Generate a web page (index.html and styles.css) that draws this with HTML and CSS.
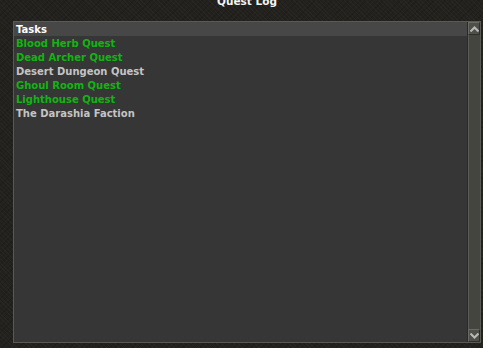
FILE: index.html
```html
<!DOCTYPE html>
<html>
<head>
<meta charset="utf-8">
<link rel="stylesheet" href="styles.css">
</head>
<body>
<div class="window">
  <div class="title">Quest Log</div>
  <div class="panel">
    <div class="list">
      <div class="row header">Tasks</div>
      <div class="row done">Blood Herb Quest</div>
      <div class="row done">Dead Archer Quest</div>
      <div class="row">Desert Dungeon Quest</div>
      <div class="row done">Ghoul Room Quest</div>
      <div class="row done">Lighthouse Quest</div>
      <div class="row">The Darashia Faction</div>
    </div>
    <div class="scrollbar">
      <div class="btn"><svg width="9" height="6" viewBox="0 0 9 6"><path d="M0.5 5.5 L4.5 1.5 L8.5 5.5" fill="none" stroke="#b8b8b8" stroke-width="2"/></svg></div>
      <div class="track"></div>
      <div class="btn"><svg width="9" height="6" viewBox="0 0 9 6"><path d="M0.5 0.5 L4.5 4.5 L8.5 0.5" fill="none" stroke="#b8b8b8" stroke-width="2"/></svg></div>
    </div>
  </div>
</div>
</body>
</html>
```

FILE: styles.css
```css
html, body {
  margin: 0;
  padding: 0;
}
body {
  width: 483px;
  height: 348px;
  overflow: hidden;
  background: #23211e;
  font-family: "DejaVu Sans", Verdana, sans-serif;
}
.window {
  height: 348px;
  display: flex;
  flex-direction: column;
  background-color: #23211e;
  background-image:
    repeating-linear-gradient(45deg, rgba(255,255,255,0.025) 0 1px, transparent 1px 3px),
    repeating-linear-gradient(-45deg, rgba(0,0,0,0.12) 0 1px, transparent 1px 4px);
}
.title {
  height: 27px;
  margin-top: -6px;
  flex: none;
  text-align: center;
  color: #f4f4f4;
  font-weight: bold;
  font-size: 10.5px;
  line-height: 14px;
  padding-left: 11px;
}
.panel {
  margin: 0 2px 5px 13px;
  flex: 1;
  display: flex;
  border: 1px solid #5a5a54;
  background: #363636;
}
.list {
  flex: 1;
  border-right: 1px solid #2a2a28;
}
.row {
  height: 14px;
  line-height: 15px;
  padding-left: 2px;
  font-size: 10px;
  font-weight: bold;
  color: #c4c4c4;
  white-space: nowrap;
}
.row.header {
  background: #474747;
  color: #ffffff;
}
.row.done {
  color: #12b412;
}
.scrollbar {
  width: 12px;
  display: flex;
  flex-direction: column;
  background: #45453f;
}
.btn {
  height: 13px;
  flex: none;
  display: flex;
  align-items: center;
  justify-content: center;
  background: #4f4f4a;
  border-top: 1px solid #6a6a64;
  border-left: 1px solid #6a6a64;
  border-bottom: 1px solid #2e2e2a;
  border-right: 1px solid #2e2e2a;
  box-sizing: border-box;
}
.track {
  flex: 1;
  border-left: 1px solid #5c5c56;
}
```
